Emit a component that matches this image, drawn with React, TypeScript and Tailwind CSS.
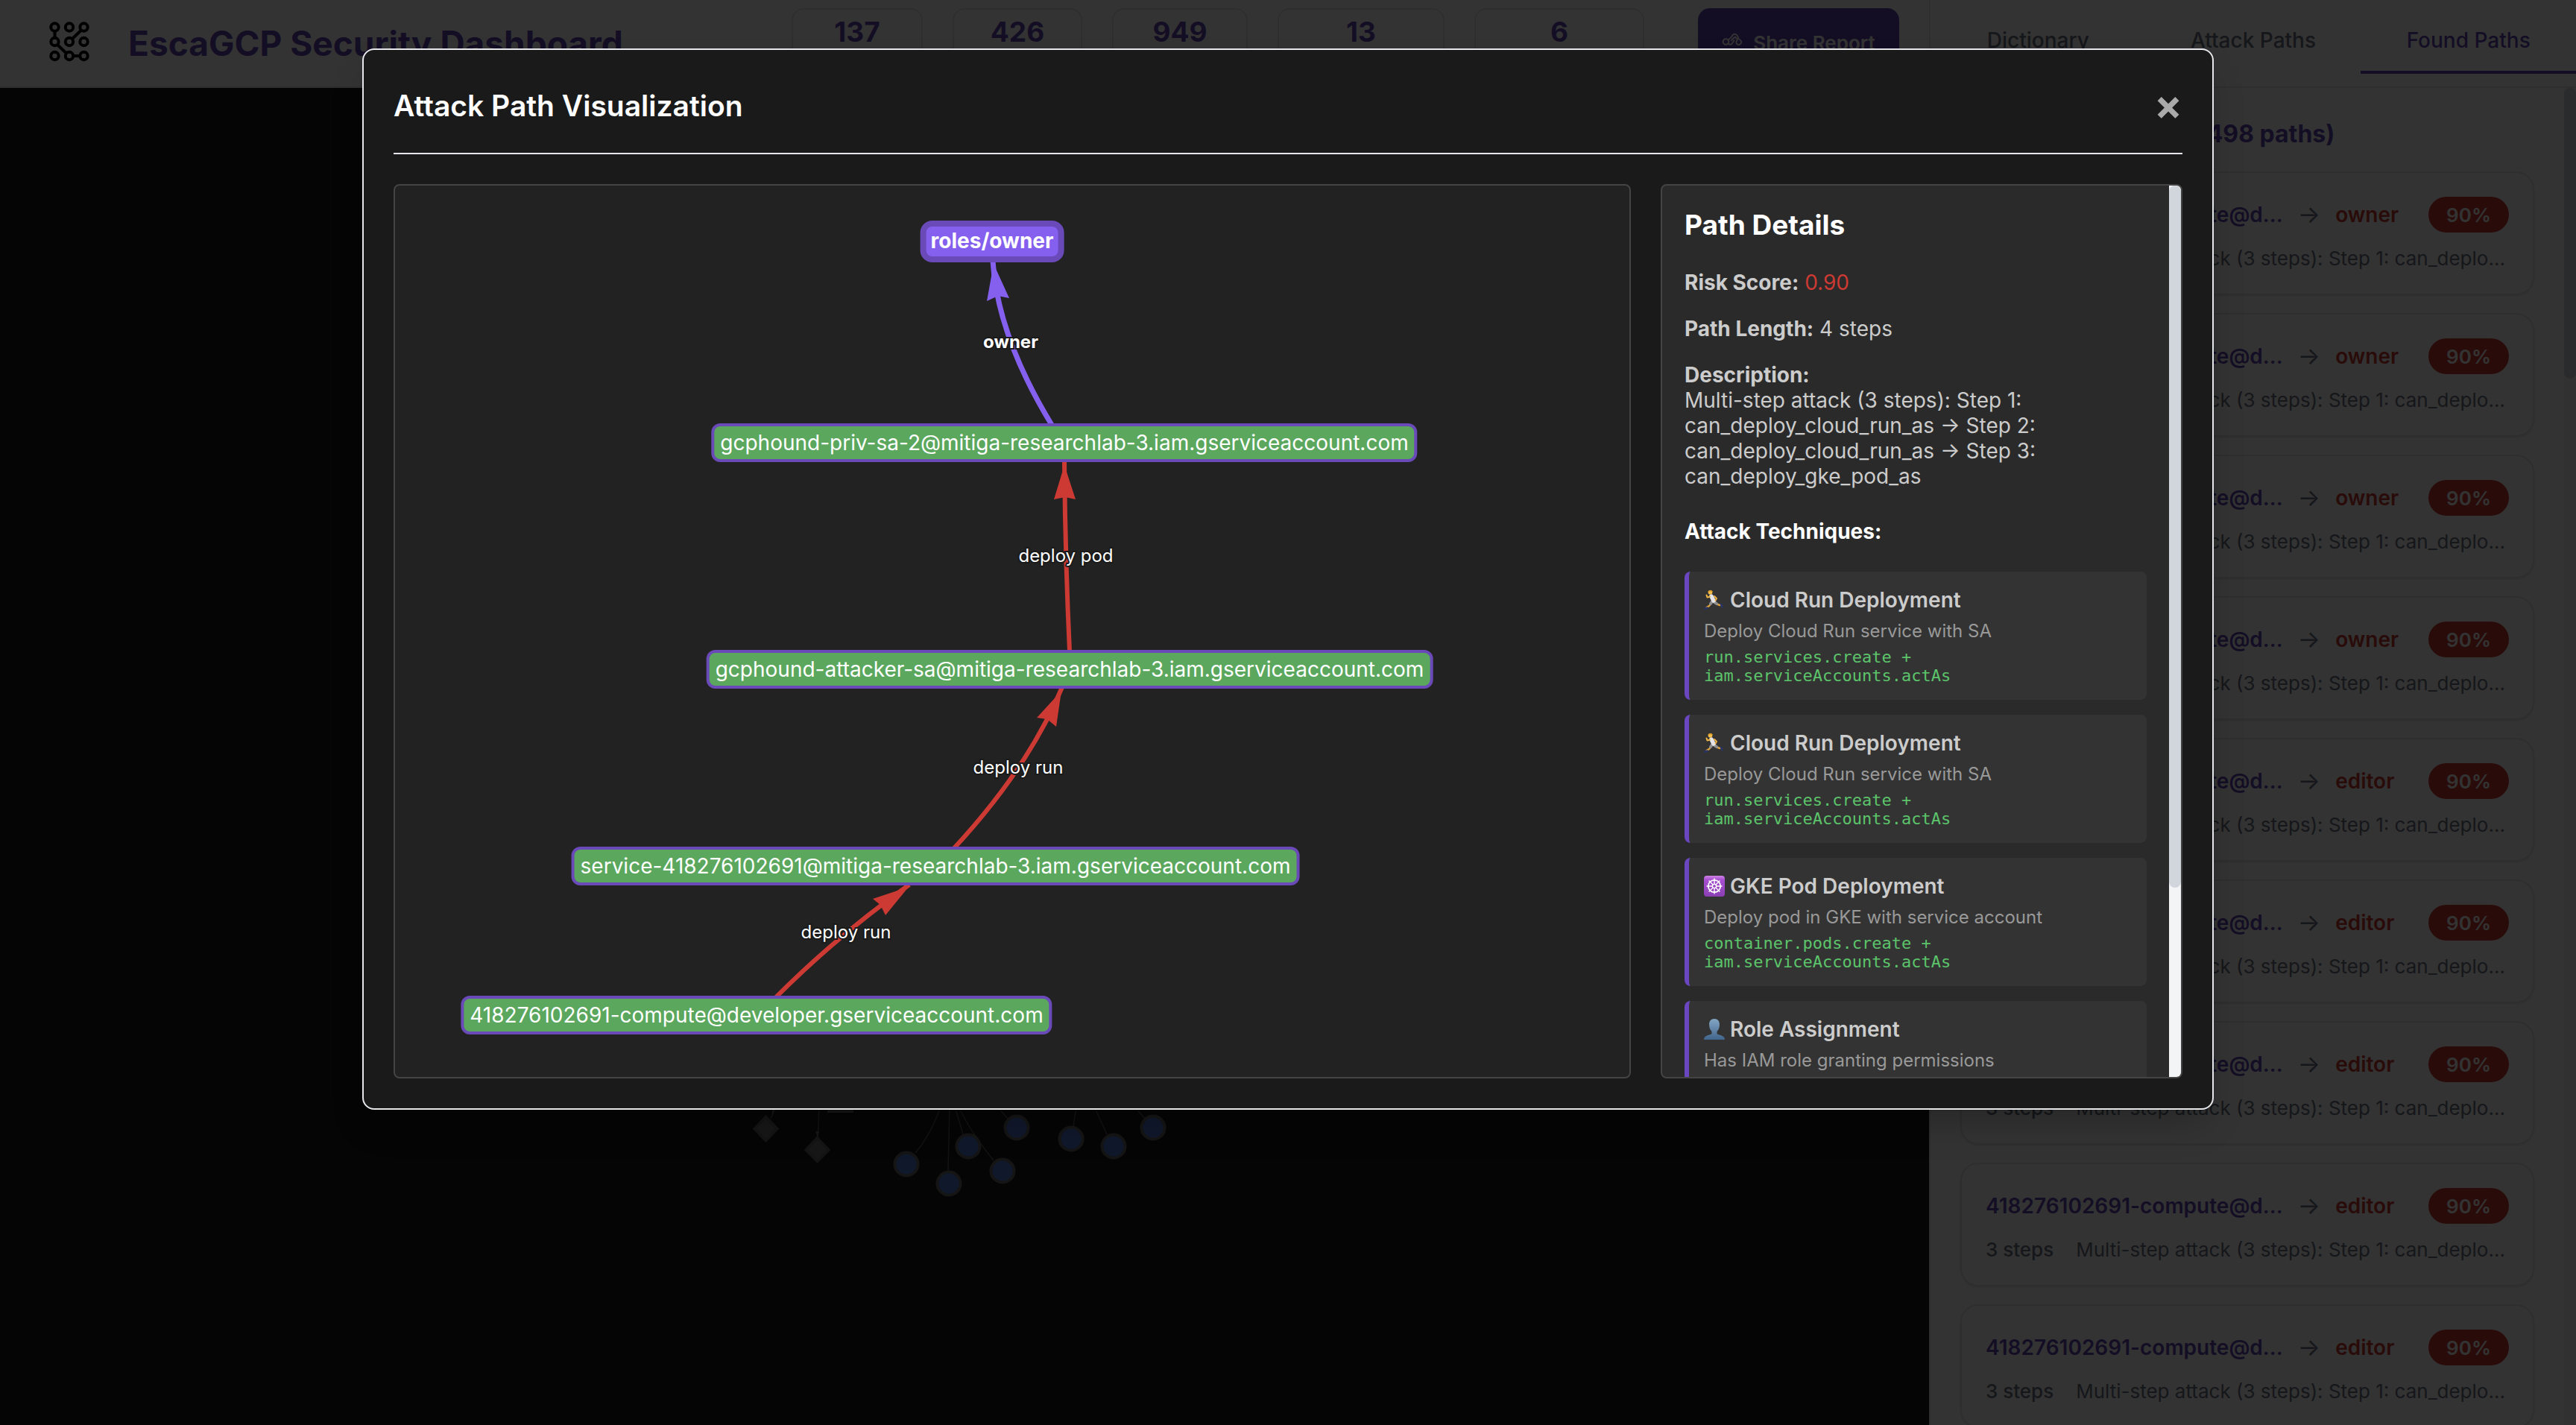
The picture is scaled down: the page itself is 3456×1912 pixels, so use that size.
import React from "react";

const stats = [
  { value: "137", width: "w-[176px]" },
  { value: "426", width: "w-[174px]" },
  { value: "949", width: "w-[182px]" },
  { value: "13", width: "w-[224px]" },
  { value: "6", width: "w-[228px]" },
];

const tabs = [
  { label: "Dictionary", active: false },
  { label: "Attack Paths", active: false },
  { label: "Found Paths", active: true },
];

const foundPaths = ["owner", "owner", "owner", "owner", "editor", "editor", "editor", "editor", "editor"];

const techniques = [
  {
    icon: "runner",
    title: "Cloud Run Deployment",
    text: "Deploy Cloud Run service with SA",
    code: "run.services.create + iam.serviceAccounts.actAs",
  },
  {
    icon: "runner",
    title: "Cloud Run Deployment",
    text: "Deploy Cloud Run service with SA",
    code: "run.services.create + iam.serviceAccounts.actAs",
  },
  {
    icon: "wheel",
    title: "GKE Pod Deployment",
    text: "Deploy pod in GKE with service account",
    code: "container.pods.create + iam.serviceAccounts.actAs",
  },
  {
    icon: "bust",
    title: "Role Assignment",
    text: "Has IAM role granting permissions",
    code: "",
  },
];

const nodes = [
  { label: "gcphound-priv-sa-2@mitiga-researchlab-3.iam.gserviceaccount.com", x: 898, y: 345 },
  { label: "gcphound-attacker-sa@mitiga-researchlab-3.iam.gserviceaccount.com", x: 905, y: 649 },
  { label: "service-418276102691@mitiga-researchlab-3.iam.gserviceaccount.com", x: 725, y: 913 },
  { label: "418276102691-compute@developer.gserviceaccount.com", x: 485, y: 1113 },
];

const edgeLabels = [
  { label: "owner", x: 826, y: 210, bold: true },
  { label: "deploy pod", x: 900, y: 497, bold: false },
  { label: "deploy run", x: 836, y: 781, bold: false },
  { label: "deploy run", x: 605, y: 1002, bold: false },
];

const principals = [
  [1216, 1562],
  [1273, 1588],
  [1299, 1538],
  [1345, 1571],
  [1364, 1513],
  [1437, 1528],
  [1494, 1538],
  [1547, 1513],
];

function Logo() {
  return (
    <svg viewBox="40 6 104 104" className="size-26 shrink-0" fill="none" stroke="#000" strokeWidth="4" aria-hidden="true">
      {[36.5, 56, 75].map((y) => [73.5, 93, 112.5].map((x) => <circle key={`${x}-${y}`} cx={x} cy={y} r="5.2" />))}
      <path d="M73.5 41.5V51M77 60L89 71.5M98 75H107.500M97 52L109 40.500" />
    </svg>
  );
}

function LinkIcon() {
  return (
    <svg viewBox="0 0 28 30" className="h-[30px] w-7" fill="none" stroke="currentColor" strokeWidth="2" strokeLinejoin="round" aria-hidden="true">
      <circle cx="5.500" cy="13" r="3.800" />
      <path d="M9 15.500C10 17 12.500 17.500 14 15L17 10.500M9 11C9.500 8 12 9 13 6.500C14.500 3 17 2 19.500 3.500C22 5 21.500 7 22.500 9C26 11 27 13.500 25.500 15.500C23.500 18 20 17 19.500 14.500C19 12.500 20.500 11 21 10L18 6.500C16 8 13.500 9.500 12.500 12" />
    </svg>
  );
}

function TechniqueIcon({ name }: { name: string }) {
  if (name === "runner") {
    return (
      <svg viewBox="0 0 28 28" className="size-7 shrink-0" fill="none" strokeLinecap="round" strokeLinejoin="round" aria-hidden="true">
        <path d="M11 17L7 22L3.500 24" stroke="#e0a23c" strokeWidth="2.400" />
        <path d="M12.500 16.500L17 19.500L21.500 21" stroke="#e0a23c" strokeWidth="2.400" />
        <path d="M4.500 24.500L1.500 25.500M23 20L24.500 23" stroke="#27356b" strokeWidth="2.600" />
        <path d="M11 16L9 19M13 16L17 19" stroke="#8d8d92" strokeWidth="4" />
        <path d="M10 9L13 15" stroke="#e3e3e8" strokeWidth="5.500" />
        <path d="M8 9.500L4.500 10.500L3.500 7.500M14 9L17 12L15.500 14.500" stroke="#f0b445" strokeWidth="2" />
        <circle cx="8.500" cy="4" r="2.800" fill="#f3bd4b" />
        <path d="M6 3Q8 0.500 11 2.500" stroke="#d99a2b" strokeWidth="1.500" />
      </svg>
    );
  }
  if (name === "wheel") {
    return (
      <svg viewBox="0 0 28 28" className="size-7 shrink-0" aria-hidden="true">
        <defs>
          <linearGradient id="wheel-bg" x1="0" y1="0" x2="0" y2="1">
            <stop offset="0" stopColor="#cf83e6" />
            <stop offset="0.200" stopColor="#a74fd0" />
            <stop offset="1" stopColor="#8b3fb4" />
          </linearGradient>
        </defs>
        <rect width="28" height="28" rx="4" fill="url(#wheel-bg)" />
        <g fill="none" stroke="#fff">
          <circle cx="14" cy="14" r="8.200" strokeWidth="1.800" />
          <path d="M14 3.500V24.500M3.500 14H24.500M6.600 6.600L21.400 21.400M21.400 6.600L6.600 21.400" strokeWidth="1.400" />
          <circle cx="14" cy="14" r="2.600" fill="#9a48c2" strokeWidth="1.400" />
        </g>
      </svg>
    );
  }
  return (
    <svg viewBox="0 0 28 28" className="size-7 shrink-0" aria-hidden="true">
      <defs>
        <linearGradient id="bust-fill" x1="0" y1="0" x2="0" y2="1">
          <stop offset="0" stopColor="#84a6c4" />
          <stop offset="1" stopColor="#41658c" />
        </linearGradient>
      </defs>
      <path
        d="M14 0C18.500 0 21 3 21 7.500C21 12 19.500 15 17.500 17V20C19 22 28 21.500 28 28H0C0 21.500 9 22 10.500 20V17C8.500 15 7 12 7 7.500C7 3 9.500 0 14 0Z"
        fill="url(#bust-fill)"
      />
    </svg>
  );
}

function NetworkGraph() {
  return (
    <svg viewBox="0 118 2588 1794" preserveAspectRatio="xMinYMin slice" className="h-full w-full" aria-hidden="true">
      <g fill="none" stroke="#5c5c5c" strokeWidth="1.500">
        <path d="M1040 1485L1034 1501M1099 1485L1097 1530M1262 1485Q1248 1524 1228 1547M1274 1485L1272 1571M1281 1485L1292 1522M1286 1485Q1304 1522 1333 1557M1338 1485L1353 1502M1444 1485L1440 1511M1468 1485L1485 1522M1522 1485L1536 1501" />
      </g>
      <g fill="#6e6e6e">
        <path d="M1036 1489H1040L1036 1497ZM1094 1518L1097 1526L1099 1518Z" />
        <rect x="1110" y="1470" width="35" height="23" />
      </g>
      <g fill="#757575" stroke="#666" strokeWidth="4">
        <path d="M1027.500 1499L1042.500 1514.500L1027.500 1530L1012.500 1514.500Z" />
        <path d="M1096.500 1527L1111.500 1543L1096.500 1558L1081.500 1543Z" />
      </g>
      <g fill="#5078dc" stroke="#6a6a6a" strokeWidth="4">
        {principals.map(([cx, cy]) => (
          <circle key={cx} cx={cx} cy={cy} r="15.500" />
        ))}
      </g>
    </svg>
  );
}

function Dashboard() {
  return (
    <div className="flex h-screen overflow-hidden bg-white">
      <div className="flex min-w-0 flex-1 flex-col">
        <header className="flex h-[118px] shrink-0 items-center border-b-2 border-gray-200 px-10">
          <Logo />
          <h1 className="ml-7 text-[46px] leading-[60px] font-bold whitespace-nowrap text-[#6446b9]">EscaGCP Security Dashboard</h1>
          <div className="ml-auto flex gap-10">
            {stats.map((s) => (
              <div key={s.value} className={`h-[94px] rounded-2xl border-2 border-gray-200 pt-2 text-center ${s.width}`}>
                <span className="text-[37px] leading-[44px] font-bold text-[#6446b9]">{s.value}</span>
              </div>
            ))}
          </div>
          <button className="ml-[72px] flex h-[94px] w-[270px] items-center justify-center gap-[14px] rounded-2xl bg-[#6446b9] text-[26px] leading-8 font-semibold text-white">
            <LinkIcon />
            Share Report
          </button>
        </header>
        <main className="min-h-0 flex-1 bg-[#1a1a1a]">
          <NetworkGraph />
        </main>
      </div>

      <aside className="flex w-[868px] shrink-0 flex-col border-l-2 border-gray-200">
        <nav className="h-[118px] shrink-0 border-b-2 border-gray-200">
          <div className="flex h-[99px]">
            {tabs.map((t) => (
              <button
                key={t.label}
                className={
                  t.active
                    ? "flex-1 border-b-4 border-[#6446b9] bg-white pt-3 text-[28px] font-medium text-[#6446b9]"
                    : "flex-1 border-b-4 border-transparent bg-[#fcfcfd] pt-3 text-[28px] font-medium text-gray-500"
                }
              >
                {t.label}
              </button>
            ))}
          </div>
        </nav>
        <div className="flex min-h-0 flex-1">
          <div className="min-w-0 flex-1 overflow-hidden pt-10 pr-10 pl-10">
            <h2 className="mb-7 flex gap-4 text-[32px] leading-[44px] font-bold text-[#6446b9]">
              <span>Found Attack Paths</span>
              <span>(498 paths)</span>
            </h2>
            <ul className="flex flex-col gap-6">
              {foundPaths.map((role, i) => (
                <li key={i} className="rounded-3xl border-2 border-gray-200 p-8 shadow-sm">
                  <div className="flex h-12 items-center text-[28px] font-semibold">
                    <span className="text-[#6446b9]">418276102691-compute@d...</span>
                    <span className="mx-5 text-[32px] font-normal text-gray-500">→</span>
                    <span className="text-[#cc3a30]">{role}</span>
                    <span className="ml-auto flex h-12 items-center rounded-full bg-[#cc3a30] px-6 text-[26px] text-white">90%</span>
                  </div>
                  <div className="mt-5 flex gap-[30px] text-[26px] leading-[30px] whitespace-nowrap text-gray-500">
                    <span className="font-medium">3 steps</span>
                    <span>Multi-step attack (3 steps): Step 1: can_deplo...</span>
                  </div>
                </li>
              ))}
            </ul>
          </div>
          <div className="w-4 shrink-0 bg-gray-100" aria-hidden="true">
            <div className="h-[390px] rounded-lg bg-gray-300" />
          </div>
        </div>
      </aside>
    </div>
  );
}

function AttackGraph() {
  return (
    <div className="relative min-w-0 flex-1 overflow-hidden rounded-lg border-2 border-[#444] bg-[#222]">
      <svg viewBox="530 249 1656 1196" width="1656" height="1196" className="absolute top-0 left-0" fill="none" aria-hidden="true">
        <path d="M1411 570Q1338 450 1332 350" stroke="#8560ee" strokeWidth="7" />
        <path d="M1333 354L1354 400L1339 397L1324 404Z" fill="#8560ee" />
        <g stroke="#cc3a33" strokeWidth="6">
          <path d="M1435 874Q1429 745 1428 620" />
          <path d="M1280 1138Q1380 1030 1425 922" />
          <path d="M1041 1338Q1125 1254 1220 1187" />
        </g>
        <g fill="#cc3a33">
          <path d="M1428 624L1443 670L1429 667L1414 670Z" />
          <path d="M1424 927L1417 975L1405 965L1391 963Z" />
          <path d="M1219 1190L1188 1228L1181 1214L1171 1206Z" />
        </g>
      </svg>
      <div className="absolute top-[75px] left-[801px] -translate-1/2 rounded-2xl border-8 border-[#6a49b8] bg-[#8560ee] px-[6px] pb-[2px] text-[28px] leading-[38px] font-bold text-white">
        roles/owner
      </div>
      {nodes.map((n) => (
        <div
          key={n.label}
          className="absolute -translate-1/2 rounded-xl border-4 border-[#6a49b8] bg-[#5aa75d] px-2 text-[28px] leading-[44px] whitespace-nowrap text-white"
          style={{ left: n.x, top: n.y }}
        >
          {n.label}
        </div>
      ))}
      {edgeLabels.map((l, i) => (
        <div
          key={i}
          className={`absolute -translate-1/2 text-[24px] leading-[30px] whitespace-nowrap text-white [-webkit-text-stroke:4px_#1a1a1a] [paint-order:stroke_fill] ${
            l.bold ? "font-bold" : "font-normal"
          }`}
          style={{ left: l.x, top: l.y }}
        >
          {l.label}
        </div>
      ))}
    </div>
  );
}

function PathDetails() {
  return (
    <section className="flex w-[700px] shrink-0 overflow-hidden rounded-lg border-2 border-[#444] bg-[#2a2a2a] text-[28px] leading-[34px] text-[#ccc]">
      <div className="min-w-0 flex-1 overflow-hidden p-[30px]">
        <h3 className="text-[37px] leading-[45px] font-bold text-white">Path Details</h3>
        <div className="mt-[38px] flex flex-col gap-7">
          <p>
            <strong>Risk Score:</strong> <span className="text-[#cc3a33]">0.90</span>
          </p>
          <p>
            <strong>Path Length:</strong> 4 steps
          </p>
          <p>
            <strong>Description:</strong>
            <br />
            Multi-step attack (3 steps): Step 1: can_deploy_cloud_run_as → Step 2: can_deploy_cloud_run_as → Step 3: can_deploy_gke_pod_as
          </p>
        </div>
        <h4 className="mt-10 font-bold text-white">Attack Techniques:</h4>
        <ul className="mt-[37px] flex flex-col gap-5">
          {techniques.map((t, i) => (
            <li key={i} className="min-h-[172px] rounded-lg border-l-[6px] border-[#6b46c1] bg-[#333] p-5">
              <div className="flex items-center gap-[7px] leading-9 font-semibold">
                <TechniqueIcon name={t.icon} />
                {t.title}
              </div>
              <div className="mt-2 text-[24px] leading-8 text-[#999]">{t.text}</div>
              {t.code && (
                <code className="mt-[6px] block font-['DejaVu_Sans_Mono',monospace] text-[22px] leading-[25px] text-[#5cc46a]">{t.code}</code>
              )}
            </li>
          ))}
        </ul>
      </div>
      <div className="w-4 shrink-0 bg-gray-100" aria-hidden="true">
        <div className="h-[942px] rounded-lg bg-gray-300" />
      </div>
    </section>
  );
}

export default function App() {
  return (
    <div className="relative font-['Inter',sans-serif]">
      <Dashboard />
      <div className="absolute inset-0 flex items-start justify-center bg-black/80 pt-[65px]">
        <div
          role="dialog"
          aria-modal="true"
          aria-labelledby="dialog-title"
          className="w-full max-w-[2484px] rounded-2xl border-2 border-gray-200 bg-[#1a1a1a] p-10 shadow-2xl"
        >
          <div className="flex h-[100px] items-start justify-between border-b-2 border-gray-200">
            <h2 id="dialog-title" className="text-[39px] leading-[69px] font-semibold text-white">
              Attack Path Visualization
            </h2>
            <button aria-label="Close" className="text-[56px] leading-[69px] font-bold text-[#aaa]">
              ×
            </button>
          </div>
          <div className="mt-10 flex h-[1200px] gap-10">
            <AttackGraph />
            <PathDetails />
          </div>
        </div>
      </div>
    </div>
  );
}
